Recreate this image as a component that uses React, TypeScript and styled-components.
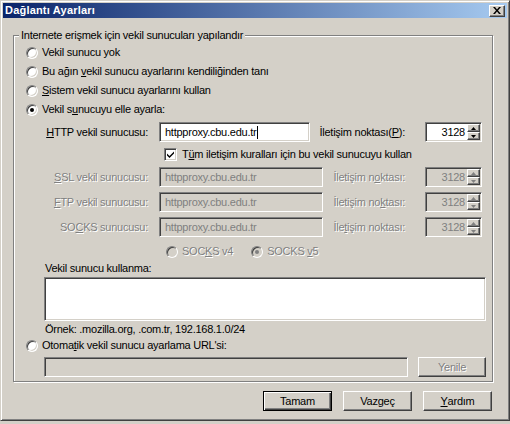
import React from "react";
import styled, { createGlobalStyle, css } from "styled-components";

const GlobalStyle = createGlobalStyle`
  html, body { margin: 0; padding: 0; background: #D4D0C8; }
  body {
    font-family: "Liberation Sans", Arial, sans-serif;
    font-size: 11px;
    letter-spacing: -0.25px;
    color: #000;
  }
  * { box-sizing: border-box; }
`;

const disabledText = css`
  color: #808080;
  text-shadow: 1px 1px 0 #fff;
`;

const sunken = css`
  border: 1px solid;
  border-color: #808080 #fff #fff #808080;
  box-shadow: inset 1px 1px #404040, inset -1px -1px #D4D0C8;
`;

const raised = css`
  border: 1px solid;
  border-color: #fff #404040 #404040 #fff;
  box-shadow: inset -1px -1px #808080, inset 1px 1px #D4D0C8;
`;

const Window = styled.div`
  width: 510px;
  height: 421px;
  padding: 2px;
  background: #D4D0C8;
  border: 1px solid;
  border-color: #D4D0C8 #404040 #404040 #D4D0C8;
  box-shadow: inset 1px 1px #fff, inset -1px -1px #808080;
  display: flex;
  flex-direction: column;
`;

const TitleBar = styled.div`
  height: 15px;
  flex: none;
  display: flex;
  align-items: center;
  justify-content: space-between;
  padding: 0 2px 0 2px;
  background: linear-gradient(to right, #0A246A, #A6CAF0);
`;

const TitleText = styled.span`
  color: #fff;
  font-weight: bold;
  font-size: 11px;
  letter-spacing: 0.2px;
  line-height: 13px;
`;

const CloseButton = styled.div`
  width: 16px;
  height: 12px;
  background: #D4D0C8;
  ${raised};
  display: flex;
  align-items: center;
  justify-content: center;
`;

const GroupBox = styled.div`
  position: relative;
  margin: 17px 14px 0 10px;
  border: 1px solid #808080;
  box-shadow: inset 1px 1px #fff, 1px 1px #fff;
  padding: 7px 0 4px 0;
`;

const GroupTitle = styled.span`
  position: absolute;
  top: -7px;
  left: 5px;
  padding: 0 2px;
  background: #D4D0C8;
  line-height: 13px;
`;

const RadioRow = styled.label<{ $indent?: number }>`
  display: flex;
  align-items: center;
  height: 19px;
  padding-left: ${(p) => p.$indent ?? 12}px;
  gap: 4px;
`;

const RadioMark = styled.span<{ $checked?: boolean; $disabled?: boolean }>`
  position: relative;
  flex: none;
  width: 12px;
  height: 12px;
  border-radius: 50%;
  background: ${(p) => (p.$disabled ? "#D4D0C8" : "#fff")};
  border: 1px solid;
  border-color: #808080 #fff #fff #808080;
  box-shadow: inset 1px 1px #404040, inset -1px -1px #D4D0C8;
  &::after {
    content: "";
    display: ${(p) => (p.$checked ? "block" : "none")};
    position: absolute;
    left: 3px;
    top: 3px;
    width: 4px;
    height: 4px;
    border-radius: 50%;
    background: ${(p) => (p.$disabled ? "#808080" : "#000")};
  }
`;

const Text = styled.span<{ $disabled?: boolean }>`
  white-space: nowrap;
  line-height: 13px;
  ${(p) => p.$disabled && disabledText};
`;

const Key = styled.u`
  text-decoration: underline;
  text-underline-offset: 1px;
`;

const Indent = styled.div`
  padding: 0 6px 0 30px;
  display: flex;
  flex-direction: column;
`;

const ProxyRow = styled.div<{ $top: number }>`
  display: flex;
  align-items: center;
  height: 20px;
  margin-top: ${(p) => p.$top}px;
  padding-right: 4px;
`;

const FieldLabel = styled.span<{ $disabled?: boolean }>`
  width: 104px;
  flex: none;
  text-align: right;
  margin-right: 11px;
  white-space: nowrap;
  ${(p) => p.$disabled && disabledText};
`;

const TextInput = styled.div<{ $disabled?: boolean }>`
  flex: 1;
  min-width: 0;
  height: 20px;
  ${sunken};
  background: ${(p) => (p.$disabled ? "#D4D0C8" : "#fff")};
  color: ${(p) => (p.$disabled ? "#808080" : "#000")};
  display: flex;
  align-items: center;
  padding-left: 5px;
  white-space: nowrap;
  overflow: hidden;
`;

const Caret = styled.span`
  display: inline-block;
  width: 1px;
  height: 13px;
  background: #000;
  margin-left: 1px;
`;

const PortLabel = styled.span<{ $disabled?: boolean }>`
  flex: none;
  margin: 0 20px 0 10px;
  white-space: nowrap;
  ${(p) => p.$disabled && disabledText};
`;

const PortBox = styled.div<{ $disabled?: boolean }>`
  width: 57px;
  height: 20px;
  flex: none;
  ${sunken};
  background: ${(p) => (p.$disabled ? "#D4D0C8" : "#fff")};
  color: ${(p) => (p.$disabled ? "#808080" : "#000")};
  display: flex;
  align-items: stretch;
  padding: 1px;
`;

const PortValue = styled.span`
  flex: 1;
  display: flex;
  align-items: center;
  justify-content: flex-end;
  padding-right: 2px;
`;

const Spinner = styled.div`
  width: 13px;
  display: flex;
  flex-direction: column;
`;

const SpinButton = styled.div`
  flex: 1;
  background: #D4D0C8;
  ${raised};
  display: flex;
  align-items: center;
  justify-content: center;
`;

const CheckRow = styled.label`
  display: flex;
  align-items: center;
  gap: 5px;
  height: 20px;
  margin-top: 2px;
  padding-left: 120px;
`;

const CheckBox = styled.span`
  width: 13px;
  height: 13px;
  flex: none;
  ${sunken};
  background: #fff;
  display: flex;
  align-items: center;
  justify-content: center;
`;

const SocksRow = styled.div`
  display: flex;
  align-items: center;
  height: 19px;
  margin-top: 5px;
  padding-left: 122px;
  gap: 18px;
`;

const SocksOption = styled.label`
  display: flex;
  align-items: center;
  gap: 4px;
`;

const PlainLine = styled.div<{ $top?: number }>`
  height: 14px;
  display: flex;
  align-items: center;
  padding-left: 1px;
  margin-top: ${(p) => p.$top ?? 0}px;
`;

const TextArea = styled.div`
  height: 44px;
  margin-top: 2px;
  ${sunken};
  background: #fff;
`;

const UrlRow = styled.div`
  display: flex;
  gap: 10px;
  margin-top: 2px;
  height: 20px;
`;

const Button = styled.div<{ $default?: boolean; $disabled?: boolean; $width?: number }>`
  width: ${(p) => p.$width ?? 69}px;
  height: 20px;
  flex: none;
  background: #D4D0C8;
  display: flex;
  align-items: center;
  justify-content: center;
  ${(p) =>
    p.$default
      ? css`
          border: 1px solid #000;
          box-shadow: inset 1px 1px #fff, inset -1px -1px #404040,
            inset -2px -2px #808080;
        `
      : raised};
  ${(p) => p.$disabled && disabledText};
`;

const Footer = styled.div`
  display: flex;
  justify-content: flex-end;
  gap: 11px;
  margin-top: 9px;
  padding-right: 15px;
`;

const ArrowUp = ({ color = "#000" }: { color?: string }) => (
  <svg width="5" height="3" viewBox="0 0 5 3">
    <path d="M2.5 0L5 3H0z" fill={color} />
  </svg>
);

const ArrowDown = ({ color = "#000" }: { color?: string }) => (
  <svg width="5" height="3" viewBox="0 0 5 3">
    <path d="M0 0h5L2.5 3z" fill={color} />
  </svg>
);

const Port = ({ disabled }: { disabled?: boolean }) => (
  <PortBox $disabled={disabled}>
    <PortValue>3128</PortValue>
    <Spinner>
      <SpinButton>
        <ArrowUp color={disabled ? "#808080" : "#000"} />
      </SpinButton>
      <SpinButton>
        <ArrowDown color={disabled ? "#808080" : "#000"} />
      </SpinButton>
    </Spinner>
  </PortBox>
);

export default function App() {
  return (
    <>
      <GlobalStyle />
      <Window>
        <TitleBar>
          <TitleText>Dağlantı Ayarları</TitleText>
          <CloseButton>
            <svg width="8" height="7" viewBox="0 0 8 7">
              <path d="M0 0h2l2 2.4L6 0h2L5 3.5 8 7H6L4 4.6 2 7H0l3-3.5z" fill="#000" />
            </svg>
          </CloseButton>
        </TitleBar>

        <GroupBox>
          <GroupTitle>Internete erişmek için vekil sunucuları yapılandır</GroupTitle>

          <RadioRow>
            <RadioMark />
            <Text>Vekil sunucu yok</Text>
          </RadioRow>
          <RadioRow>
            <RadioMark />
            <Text>
              Bu ağın <Key>v</Key>ekil sunucu ayarlarını kendiliğinden tanı
            </Text>
          </RadioRow>
          <RadioRow>
            <RadioMark />
            <Text>
              <Key>S</Key>istem vekil sunucu ayarlarını kullan
            </Text>
          </RadioRow>
          <RadioRow>
            <RadioMark $checked />
            <Text>
              Vekil s<Key>u</Key>nucuyu elle ayarla:
            </Text>
          </RadioRow>

          <Indent>
            <ProxyRow $top={3}>
              <FieldLabel>
                <Key>H</Key>TTP vekil sunucusu:
              </FieldLabel>
              <TextInput>
                httpproxy.cbu.edu.tr
                <Caret />
              </TextInput>
              <PortLabel>
                İletişim noktası(<Key>P</Key>):
              </PortLabel>
              <Port />
            </ProxyRow>

            <CheckRow>
              <CheckBox>
                <svg width="7" height="7" viewBox="0 0 7 7">
                  <path d="M0 2.5l2.5 2.5L7 0.5V2.5L2.5 7 0 4.5z" fill="#000" />
                </svg>
              </CheckBox>
              <Text>
                T<Key>ü</Key>m iletişim kuralları için bu vekil sunucuyu kullan
              </Text>
            </CheckRow>

            <ProxyRow $top={3}>
              <FieldLabel $disabled>
                <Key>S</Key>SL vekil sunucusu:
              </FieldLabel>
              <TextInput $disabled>httpproxy.cbu.edu.tr</TextInput>
              <PortLabel $disabled>
                İletişim n<Key>o</Key>ktası:
              </PortLabel>
              <Port disabled />
            </ProxyRow>

            <ProxyRow $top={5}>
              <FieldLabel $disabled>
                <Key>F</Key>TP vekil sunucusu:
              </FieldLabel>
              <TextInput $disabled>httpproxy.cbu.edu.tr</TextInput>
              <PortLabel $disabled>
                İletişim no<Key>k</Key>tası:
              </PortLabel>
              <Port disabled />
            </ProxyRow>

            <ProxyRow $top={5}>
              <FieldLabel $disabled>
                SO<Key>C</Key>KS sunucusu:
              </FieldLabel>
              <TextInput $disabled>httpproxy.cbu.edu.tr</TextInput>
              <PortLabel $disabled>
                İle<Key>t</Key>işim noktası:
              </PortLabel>
              <Port disabled />
            </ProxyRow>

            <SocksRow>
              <SocksOption>
                <RadioMark $disabled />
                <Text $disabled>
                  SOC<Key>K</Key>S v4
                </Text>
              </SocksOption>
              <SocksOption>
                <RadioMark $disabled $checked />
                <Text $disabled>
                  SOCKS <Key>v</Key>5
                </Text>
              </SocksOption>
            </SocksRow>

            <PlainLine>
              <Text>Vekil sunucu kullanma:</Text>
            </PlainLine>
            <TextArea />
            <PlainLine $top={1}>
              <Text>Örnek: .mozilla.org, .com.tr, 192.168.1.0/24</Text>
            </PlainLine>
          </Indent>

          <RadioRow>
            <RadioMark />
            <Text>
              Otoma<Key>t</Key>ik vekil sunucu ayarlama URL'si:
            </Text>
          </RadioRow>

          <Indent>
            <UrlRow>
              <TextInput $disabled />
              <Button $disabled $width={68}>
                Yenile
              </Button>
            </UrlRow>
          </Indent>
        </GroupBox>

        <Footer>
          <Button $default>Tamam</Button>
          <Button>Vazgeç</Button>
          <Button>
            <Key>Y</Key>ardım
          </Button>
        </Footer>
      </Window>
    </>
  );
}
